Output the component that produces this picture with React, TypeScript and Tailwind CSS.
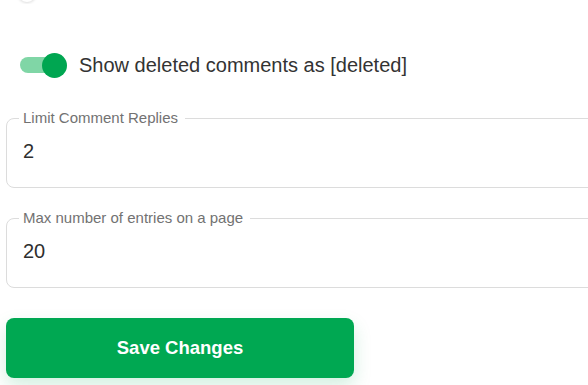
import React from "react";

function Field({ label, value }: { label: string; value: string }) {
  return (
    <fieldset className="w-[660px] border border-[#dcdcdc] rounded-[8px] px-[16px] pt-[12px] pb-[24px] m-0 min-w-0">
      <legend className="text-[15px] leading-[18px] text-[#727272] pl-[4px] pr-[7px] -ml-[4px]">{label}</legend>
      <div className="text-[20px] leading-[24px] text-[#2f2f2f]">{value}</div>
    </fieldset>
  );
}

export default function App() {
  return (
    <div className="w-[588px] h-[385px] overflow-hidden bg-white font-['Liberation_Sans',Arial,sans-serif]">
      <div className="h-[4px] overflow-hidden pl-[18px]">
        <div className="w-[18px] h-[18px] -mt-[16px] rounded-full bg-white shadow-[0_1px_3px_rgba(0,0,0,0.15)]" />
      </div>
      <div className="pl-[6px]">
        <div className="mt-[48px] h-[26px] flex items-center">
          <div className="relative ml-[14px] w-[44px] h-[16px] rounded-full bg-[#80d6a6]">
            <div className="absolute left-[22px] -top-[4.5px] w-[25px] h-[25px] rounded-full bg-[#00a651]" />
          </div>
          <span className="ml-[15px] text-[20px] leading-[24px] text-[#333333]">
            Show deleted comments as [deleted]
          </span>
        </div>
        <div className="mt-[31px]">
          <Field label="Limit Comment Replies" value="2" />
        </div>
        <div className="mt-[21px]">
          <Field label="Max number of entries on a page" value="20" />
        </div>
        <button className="mt-[30px] w-[348px] h-[60px] rounded-[8px] bg-[#00a852] text-white font-bold text-[18.5px] shadow-[0_8px_18px_rgba(0,168,82,0.18)] flex items-center justify-center">
          Save Changes
        </button>
      </div>
    </div>
  );
}
